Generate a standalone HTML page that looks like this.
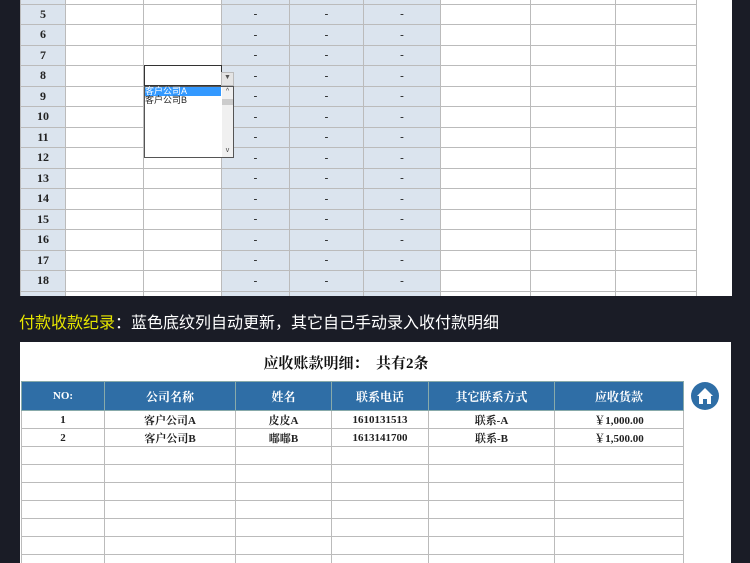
<!DOCTYPE html><html><head><meta charset="utf-8"><style>
html,body{margin:0;width:750px;height:563px;overflow:hidden}
body{background:#1a1c26;font-family:"Liberation Serif","Noto Serif CJK SC",serif;position:relative}
.p{position:absolute}
table{border-collapse:collapse;position:absolute;table-layout:fixed}
td{border:1px solid #bbb;padding:0;text-align:center;font-size:11px;font-weight:bold;color:#222}
.b{background:#dbe4ee}
.n td:first-child{font-size:12px}
</style></head><body>
<div class="p" style="left:20px;top:0;width:712px;height:296px;background:#fff;overflow:hidden">
<table class="n" style="left:0;top:-17px;width:676px">
<colgroup><col style="width:45px"><col style="width:78px"><col style="width:78px"><col style="width:68px"><col style="width:74px"><col style="width:77px"><col style="width:90px"><col style="width:85px"><col style="width:81px"></colgroup>
<tr style="height:20.5px"><td class="b"></td><td></td><td></td><td class="b"></td><td class="b"></td><td class="b"></td><td></td><td></td><td></td></tr>
<tr style="height:20.5px"><td class="b">5</td><td></td><td></td><td class="b">-</td><td class="b">-</td><td class="b">-</td><td></td><td></td><td></td></tr>
<tr style="height:20.5px"><td class="b">6</td><td></td><td></td><td class="b">-</td><td class="b">-</td><td class="b">-</td><td></td><td></td><td></td></tr>
<tr style="height:20.5px"><td class="b">7</td><td></td><td></td><td class="b">-</td><td class="b">-</td><td class="b">-</td><td></td><td></td><td></td></tr>
<tr style="height:20.5px"><td class="b">8</td><td></td><td></td><td class="b">-</td><td class="b">-</td><td class="b">-</td><td></td><td></td><td></td></tr>
<tr style="height:20.5px"><td class="b">9</td><td></td><td></td><td class="b">-</td><td class="b">-</td><td class="b">-</td><td></td><td></td><td></td></tr>
<tr style="height:20.5px"><td class="b">10</td><td></td><td></td><td class="b">-</td><td class="b">-</td><td class="b">-</td><td></td><td></td><td></td></tr>
<tr style="height:20.5px"><td class="b">11</td><td></td><td></td><td class="b">-</td><td class="b">-</td><td class="b">-</td><td></td><td></td><td></td></tr>
<tr style="height:20.5px"><td class="b">12</td><td></td><td></td><td class="b">-</td><td class="b">-</td><td class="b">-</td><td></td><td></td><td></td></tr>
<tr style="height:20.5px"><td class="b">13</td><td></td><td></td><td class="b">-</td><td class="b">-</td><td class="b">-</td><td></td><td></td><td></td></tr>
<tr style="height:20.5px"><td class="b">14</td><td></td><td></td><td class="b">-</td><td class="b">-</td><td class="b">-</td><td></td><td></td><td></td></tr>
<tr style="height:20.5px"><td class="b">15</td><td></td><td></td><td class="b">-</td><td class="b">-</td><td class="b">-</td><td></td><td></td><td></td></tr>
<tr style="height:20.5px"><td class="b">16</td><td></td><td></td><td class="b">-</td><td class="b">-</td><td class="b">-</td><td></td><td></td><td></td></tr>
<tr style="height:20.5px"><td class="b">17</td><td></td><td></td><td class="b">-</td><td class="b">-</td><td class="b">-</td><td></td><td></td><td></td></tr>
<tr style="height:20.5px"><td class="b">18</td><td></td><td></td><td class="b">-</td><td class="b">-</td><td class="b">-</td><td></td><td></td><td></td></tr>
<tr style="height:20.5px"><td class="b"></td><td></td><td></td><td class="b"></td><td class="b"></td><td class="b"></td><td></td><td></td><td></td></tr>
</table>
</div>
<div class="p" style="left:144px;top:65px;width:76px;height:19px;border:1px solid #333;background:#fff"></div>
<div class="p" style="left:221px;top:72px;width:11px;height:12px;background:#e4e4e4;border:1px solid #bbb;font-size:7px;text-align:center;color:#555">▼</div>
<div class="p" style="left:144px;top:86px;width:88px;height:70px;border:1px solid #555;background:#fff;font-size:9px;font-family:'Liberation Sans','Noto Sans CJK SC',sans-serif;line-height:9px">
<div style="background:#3399ff;color:#fff;width:76px">客户公司A</div><div style="color:#222">客户公司B</div>
<div class="p" style="right:0;top:0;width:11px;height:70px;background:#f0f0f0;font-size:7px;text-align:center;color:#444">^<br><div style="background:#ccc;height:6px;margin-top:3px"></div><div style="position:absolute;bottom:2px;width:11px">v</div></div></div>
<div class="p" style="left:19px;top:309px;font-size:16px;color:#fff;font-family:'Liberation Sans','Noto Sans CJK SC',sans-serif;white-space:nowrap"><span style="color:#e6e600">付款收款纪录</span>：蓝色底纹列自动更新，其它自己手动录入收付款明细</div>
<div class="p" style="left:20px;top:342px;width:711px;height:221px;background:#fff;overflow:hidden">
<div class="p" style="left:0;top:10px;width:652px;text-align:center;font-size:15px;color:#111;font-weight:bold">应收账款明细：&nbsp;&nbsp;共有2条</div>
<table style="left:1px;top:39px;width:662px">
<colgroup><col style="width:83px"><col style="width:131px"><col style="width:96px"><col style="width:97px"><col style="width:126px"><col style="width:129px"></colgroup>
<tr style="height:29px;background:#2f6ea6;color:#fff"><td style="color:#fff;border-color:#8aa">NO:</td><td style="color:#fff;border-color:#8aa;font-size:12px">公司名称</td><td style="color:#fff;border-color:#8aa;font-size:12px">姓名</td><td style="color:#fff;border-color:#8aa;font-size:12px">联系电话</td><td style="color:#fff;border-color:#8aa;font-size:12px">其它联系方式</td><td style="color:#fff;border-color:#8aa;font-size:12px">应收货款</td></tr>
<tr style="height:18px"><td>1</td><td>客户公司A</td><td>皮皮A</td><td>1610131513</td><td>联系-A</td><td>￥1,000.00</td></tr>
<tr style="height:18px"><td>2</td><td>客户公司B</td><td>嘟嘟B</td><td>1613141700</td><td>联系-B</td><td>￥1,500.00</td></tr>
<tr style="height:18px"><td></td><td></td><td></td><td></td><td></td><td></td></tr>
<tr style="height:18px"><td></td><td></td><td></td><td></td><td></td><td></td></tr>
<tr style="height:18px"><td></td><td></td><td></td><td></td><td></td><td></td></tr>
<tr style="height:18px"><td></td><td></td><td></td><td></td><td></td><td></td></tr>
<tr style="height:18px"><td></td><td></td><td></td><td></td><td></td><td></td></tr>
<tr style="height:18px"><td></td><td></td><td></td><td></td><td></td><td></td></tr>
<tr style="height:18px"><td></td><td></td><td></td><td></td><td></td><td></td></tr>
</table>
</div>
<svg class="p" style="left:690px;top:381px" width="30" height="30" viewBox="0 0 30 30"><circle cx="15" cy="15" r="14" fill="#2f6ea6"/><path d="M7 15 L15 7 L23 15 L21 15 L21 23 L17 23 L17 18 L13 18 L13 23 L9 23 L9 15Z" fill="#fff"/></svg>
</body></html>
